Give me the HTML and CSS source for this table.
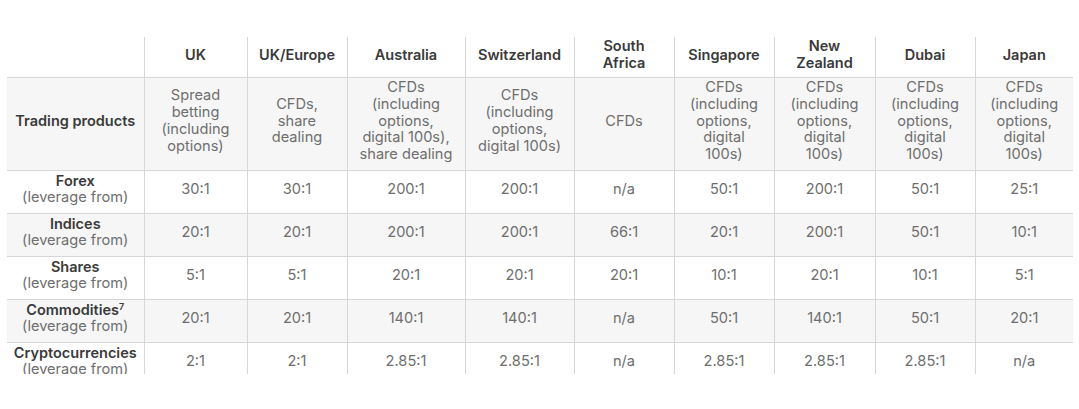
FILE: index.html
```html
<!DOCTYPE html>
<html>
<head>
<meta charset="utf-8">
<link rel="stylesheet" href="styles.css">
</head>
<body>
<div class="frame">
<table class="grid">
<colgroup>
<col class="c-label"><col class="c-uk"><col class="c-uke"><col class="c-au"><col class="c-ch"><col class="c-za"><col class="c-sg"><col class="c-nz"><col class="c-db"><col class="c-jp">
</colgroup>
<thead>
<tr class="head">
<th></th><th>UK</th><th>UK/Europe</th><th>Australia</th><th>Switzerland</th><th>South<br>Africa</th><th>Singapore</th><th>New<br>Zealand</th><th>Dubai</th><th>Japan</th>
</tr>
</thead>
<tbody>
<tr class="products shade">
<th class="rowlabel single">Trading products</th>
<td>Spread<br>betting<br>(including<br>options)</td>
<td>CFDs,<br>share<br>dealing</td>
<td>CFDs<br>(including<br>options,<br>digital 100s),<br>share dealing</td>
<td>CFDs<br>(including<br>options,<br>digital 100s)</td>
<td>CFDs</td>
<td>CFDs<br>(including<br>options,<br>digital<br>100s)</td>
<td>CFDs<br>(including<br>options,<br>digital<br>100s)</td>
<td>CFDs<br>(including<br>options,<br>digital<br>100s)</td>
<td>CFDs<br>(including<br>options,<br>digital<br>100s)</td>
</tr>
<tr class="lev">
<th class="rowlabel"><span class="name">Forex</span><span class="sub">(leverage from)</span></th>
<td>30:1</td><td>30:1</td><td>200:1</td><td>200:1</td><td>n/a</td><td>50:1</td><td>200:1</td><td>50:1</td><td>25:1</td>
</tr>
<tr class="lev shade">
<th class="rowlabel"><span class="name">Indices</span><span class="sub">(leverage from)</span></th>
<td>20:1</td><td>20:1</td><td>200:1</td><td>200:1</td><td>66:1</td><td>20:1</td><td>200:1</td><td>50:1</td><td>10:1</td>
</tr>
<tr class="lev">
<th class="rowlabel"><span class="name">Shares</span><span class="sub">(leverage from)</span></th>
<td>5:1</td><td>5:1</td><td>20:1</td><td>20:1</td><td>20:1</td><td>10:1</td><td>20:1</td><td>10:1</td><td>5:1</td>
</tr>
<tr class="lev shade">
<th class="rowlabel"><span class="name">Commodities<sup>7</sup></span><span class="sub">(leverage from)</span></th>
<td>20:1</td><td>20:1</td><td>140:1</td><td>140:1</td><td>n/a</td><td>50:1</td><td>140:1</td><td>50:1</td><td>20:1</td>
</tr>
<tr class="lev">
<th class="rowlabel"><span class="name">Cryptocurrencies</span><span class="sub">(leverage from)</span></th>
<td>2:1</td><td>2:1</td><td>2.85:1</td><td>2.85:1</td><td>n/a</td><td>2.85:1</td><td>2.85:1</td><td>2.85:1</td><td>n/a</td>
</tr>
</tbody>
</table>
</div>
</body>
</html>
```

FILE: styles.css
```css
html, body {
  margin: 0;
  padding: 0;
  background: #ffffff;
}

body {
  font-family: "Inter", "Lato", sans-serif;
  color: #6e6e6e;
}

.frame {
  margin: 37px 6px 0 7px;
  height: 337px;
  overflow: hidden;
}

.grid {
  width: 1066px;
  table-layout: fixed;
  border-collapse: collapse;
}

.c-label { width: 137px; }
.c-uk { width: 103px; }
.c-uke { width: 100px; }
.c-au { width: 118px; }
.c-ch { width: 109px; }
.c-za { width: 100px; }
.c-sg { width: 100px; }
.c-nz { width: 101px; }
.c-db { width: 100px; }
.c-jp { width: 98px; }

.grid th,
.grid td {
  border: 1px solid #d6d6d6;
  text-align: center;
  vertical-align: middle;
  white-space: nowrap;
  padding: 1px 2px 6px;
}

.grid tr > :first-child { border-left: none; }
.grid tr > :last-child { border-right: none; }
.head th { border-top: none; }

.head {
  height: 40px;
}

.head th {
  font-size: 14.5px;
  font-weight: 600;
  color: #3a3a3a;
  line-height: 17px;
  padding: 0 2px 5px;
}

.shade th,
.shade td {
  background: #f6f6f6;
}

.products {
  height: 93px;
}

.products td {
  font-size: 14.6px;
  line-height: 16.8px;
  padding: 0 2px 5px;
}

.rowlabel.single {
  font-size: 14.5px;
  font-weight: 600;
  color: #3a3a3a;
}

.lev {
  height: 43px;
}

.lev td {
  font-size: 14.6px;
  line-height: 17px;
  padding: 1px 2px 6px;
}

.rowlabel {
  line-height: 16.3px;
}

.rowlabel .name {
  display: block;
  font-size: 14.5px;
  font-weight: 600;
  color: #3a3a3a;
}

.rowlabel .sub {
  display: block;
  font-size: 14.6px;
  font-weight: 400;
  color: #6e6e6e;
}

.rowlabel sup {
  font-size: 9px;
  line-height: 0;
  vertical-align: 5px;
}
```
